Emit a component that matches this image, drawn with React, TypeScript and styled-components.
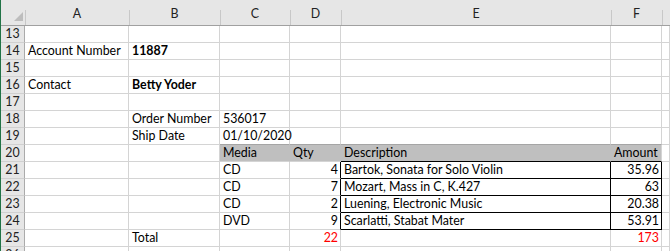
import React from 'react';
import styled, { createGlobalStyle } from 'styled-components';

const GlobalStyle = createGlobalStyle`
  html, body {
    margin: 0;
    padding: 0;
    background: #fff;
  }
  body {
    font-family: Lato, 'Open Sans', sans-serif;
    font-size: 12.4px;
    color: #000;
  }
`;

/* ── palette ── */

const GRID = '#d4d4d4';
const HEAD_BG = '#e6e6e6';
const HEAD_RULE = '#a0a0a0';
const FILL = '#bfbfbf';
const INK = '#000';

/* ── styled primitives ── */

const Sheet = styled.div`
  display: grid;
  grid-template-columns: 24px 104px 91px 70px 51px 270px 51px 1fr;
  grid-template-rows: 26px;
  grid-auto-rows: 17px;
  width: 670px;
  height: 251px;
  overflow: hidden;
  background: #fff;
  border-left: 1px solid #217346;
  box-sizing: border-box;
`;

const Corner = styled.div`
  background: ${HEAD_BG};
  border-bottom: 1px solid ${HEAD_RULE};
  box-sizing: border-box;
  display: flex;
  align-items: flex-end;
  justify-content: flex-end;
  padding: 0 1px 3px 0;

  svg {
    display: block;
  }
`;

const ColHeader = styled.div`
  background-color: ${HEAD_BG};
  background-image: linear-gradient(#c8c8c8, #c8c8c8);
  background-size: 1px 15px;
  background-position: left bottom;
  background-repeat: no-repeat;
  border-bottom: 1px solid ${HEAD_RULE};
  box-sizing: border-box;
  display: flex;
  align-items: flex-end;
  justify-content: center;
  padding-bottom: 3px;
  line-height: 16px;
  color: #222;
`;

const RowHeader = styled.div`
  background: ${HEAD_BG};
  border-right: 1px solid #ababab;
  border-bottom: 1px solid #d0d0d0;
  box-sizing: border-box;
  display: flex;
  align-items: flex-end;
  justify-content: center;
  line-height: 16px;
  color: #222;
`;

type Edge = string | undefined;

const Cell = styled.div<{
  $right?: boolean;
  $bold?: boolean;
  $red?: boolean;
  $fill?: string;
  $edgeR?: Edge;
  $edgeB?: Edge;
}>`
  box-sizing: border-box;
  min-width: 0;
  display: flex;
  align-items: flex-end;
  justify-content: ${(p) => (p.$right ? 'flex-end' : 'flex-start')};
  padding: 0 ${(p) => (p.$right ? '2px' : '0')} 0 ${(p) => (p.$right ? '0' : '3px')};
  white-space: nowrap;
  overflow: visible;
  line-height: 16px;
  background: ${(p) => p.$fill ?? 'transparent'};
  border-right: 1px solid ${(p) => p.$edgeR ?? GRID};
  border-bottom: 1px solid ${(p) => p.$edgeB ?? GRID};
  font-weight: ${(p) => (p.$bold ? 700 : 400)};
  color: ${(p) => (p.$red ? '#ff0000' : INK)};
`;

/* ── data ── */

interface CellSpec {
  v?: string;
  right?: boolean;
  bold?: boolean;
  red?: boolean;
  fill?: string;
  r?: string;
  b?: string;
}

const COLS = ['A', 'B', 'C', 'D', 'E', 'F', ''];

const HEAD_TOP = '#a5a5a5';
const LINE = '#000';

const row = (...cells: CellSpec[]): CellSpec[] => {
  const out = [...cells];
  while (out.length < 7) out.push({});
  return out;
};

const lineItem = (media: string, qty: string, desc: string, amount: string): CellSpec[] =>
  row(
    {},
    {},
    { v: media },
    { v: qty, right: true, r: LINE },
    { v: desc, r: LINE, b: LINE },
    { v: amount, right: true, r: LINE, b: LINE },
  );

const ROWS: { n: number; cells: CellSpec[] }[] = [
  { n: 13, cells: row() },
  { n: 14, cells: row({ v: 'Account Number' }, { v: '11887', bold: true }) },
  { n: 15, cells: row() },
  { n: 16, cells: row({ v: 'Contact' }, { v: 'Betty Yoder', bold: true }) },
  { n: 17, cells: row() },
  { n: 18, cells: row({}, { v: 'Order Number' }, { v: '536017' }) },
  {
    n: 19,
    cells: row(
      {},
      { v: 'Ship Date' },
      { v: '01/10/2020', b: HEAD_TOP },
      { b: HEAD_TOP },
      { b: HEAD_TOP },
      { b: HEAD_TOP },
    ),
  },
  {
    n: 20,
    cells: row(
      {},
      {},
      { v: 'Media', fill: FILL, r: FILL },
      { v: 'Qty', fill: FILL, r: FILL },
      { v: 'Description', fill: FILL, r: FILL, b: LINE },
      { v: 'Amount', fill: FILL, b: LINE },
    ),
  },
  { n: 21, cells: lineItem('CD', '4', 'Bartok, Sonata for Solo Violin', '35.96') },
  { n: 22, cells: lineItem('CD', '7', 'Mozart, Mass in C, K.427', '63') },
  { n: 23, cells: lineItem('CD', '2', 'Luening, Electronic Music', '20.38') },
  { n: 24, cells: lineItem('DVD', '9', 'Scarlatti, Stabat Mater', '53.91') },
  {
    n: 25,
    cells: row(
      {},
      { v: 'Total' },
      {},
      { v: '22', right: true, red: true },
      {},
      { v: '173', right: true, red: true },
    ),
  },
  { n: 26, cells: row() },
];

/* ── component ── */

export default function App() {
  return (
    <>
      <GlobalStyle />
      <Sheet>
        <Corner>
          <svg width="10" height="10" viewBox="0 0 10 10">
            <polygon points="9,0 9,9 0,9" fill="#bdbdbd" />
          </svg>
        </Corner>
        {COLS.map((c, i) => (
          <ColHeader key={`h${i}`}>{c}</ColHeader>
        ))}

        {ROWS.map(({ n, cells }) => (
          <React.Fragment key={n}>
            <RowHeader>{n}</RowHeader>
            {cells.map((c, i) => (
              <Cell
                key={i}
                $right={c.right}
                $bold={c.bold}
                $red={c.red}
                $fill={c.fill}
                $edgeR={c.r}
                $edgeB={c.b}
              >
                {c.v}
              </Cell>
            ))}
          </React.Fragment>
        ))}
      </Sheet>
    </>
  );
}
